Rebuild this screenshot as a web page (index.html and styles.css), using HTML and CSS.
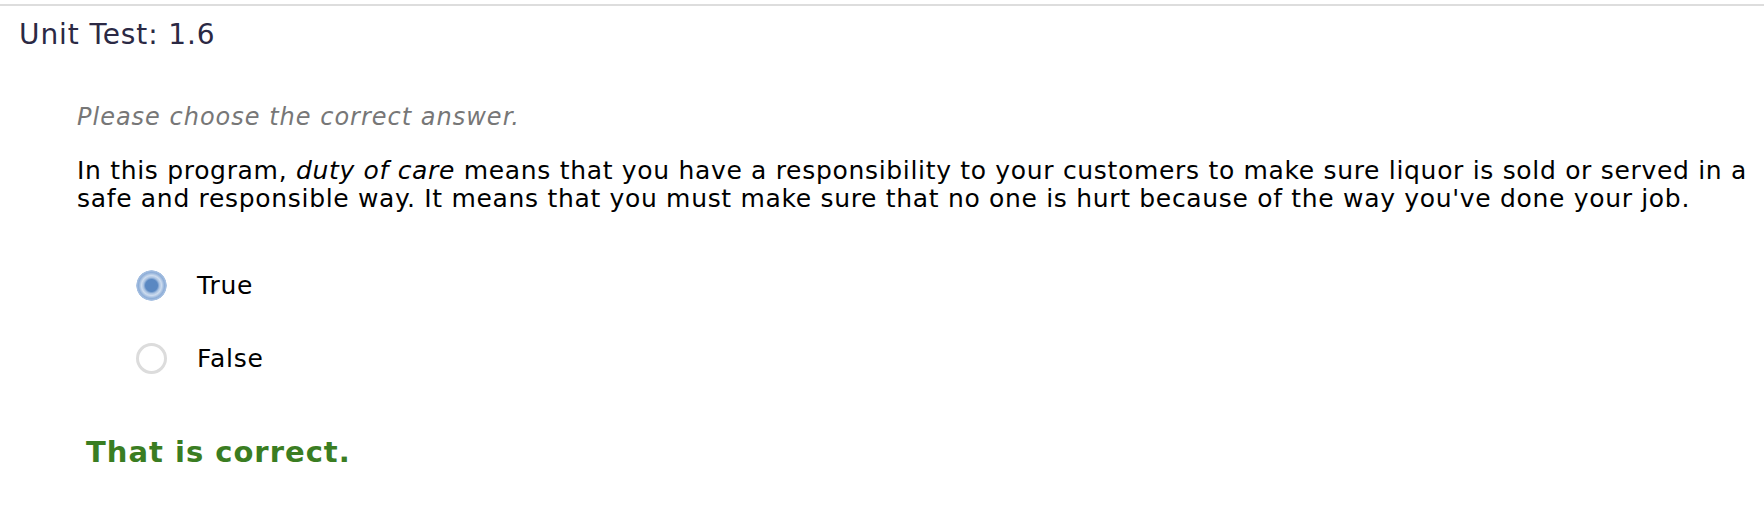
FILE: index.html
```html
<!DOCTYPE html>
<html lang="en">
<head>
<meta charset="utf-8">
<title>Unit Test: 1.6</title>
<link rel="stylesheet" href="styles.css">
</head>
<body>
<div class="page">
  <div class="rule"></div>
  <h1 class="title">Unit Test: 1.6</h1>
  <div class="question">
    <p class="prompt">Please choose the correct answer.</p>
    <p class="stem">In this program, <em>duty of care</em> means that you have a responsibility to your customers to make sure liquor is sold or served in a safe and responsible way. It means that you must make sure that no one is hurt because of the way you've done your job.</p>
    <div class="options">
      <label class="option"><span class="radio checked"></span><span class="label">True</span></label>
      <label class="option"><span class="radio"></span><span class="label">False</span></label>
    </div>
    <p class="feedback">That is correct.</p>
  </div>
</div>
</body>
</html>
```
FILE: styles.css
```css
html, body {
  margin: 0;
  padding: 0;
  background: #fff;
}
body {
  font-family: "DejaVu Sans", Verdana, sans-serif;
  color: #000;
}
.page {
  padding-top: 4px;
}
.rule {
  height: 2px;
  background: #dddddd;
}
.title {
  margin: 0;
  padding: 12px 0 0 19px;
  font-size: 28px;
  letter-spacing: 0.9px;
  font-weight: normal;
  line-height: 34px;
  color: #2b2944;
}
.question {
  padding-left: 77px;
}
.prompt {
  margin: 50px 0 0 0;
  font-size: 24px;
  letter-spacing: 1px;
  line-height: 30px;
  font-style: italic;
  color: #777777;
}
.stem {
  margin: 25px 0 0 0;
  font-size: 25px;
  letter-spacing: 0.68px;
  line-height: 28px;
}
.options {
  display: flex;
  flex-direction: column;
  gap: 42px;
  margin-top: 57px;
  padding-left: 59px;
}
.option {
  display: flex;
  align-items: center;
  gap: 30px;
  font-size: 25px;
  letter-spacing: 0.8px;
  line-height: 30px;
}
.radio {
  width: 31px;
  height: 31px;
  border-radius: 50%;
  box-sizing: border-box;
  flex: none;
  border: 3px solid #dcdcdc;
  background: #fff;
}
.radio.checked {
  border: none;
  background: radial-gradient(circle at center, #5a88c2 0, #5a88c2 6px, #a9c2e2 8px, #cddcef 10px, #8eaed8 13px, #aac3e3 15px, rgba(255,255,255,0) 15.5px);
}
.feedback {
  margin: 61px 0 0 9px;
  font-size: 29px;
  letter-spacing: 1px;
  line-height: 34px;
  font-weight: bold;
  color: #3a7d22;
}
```
